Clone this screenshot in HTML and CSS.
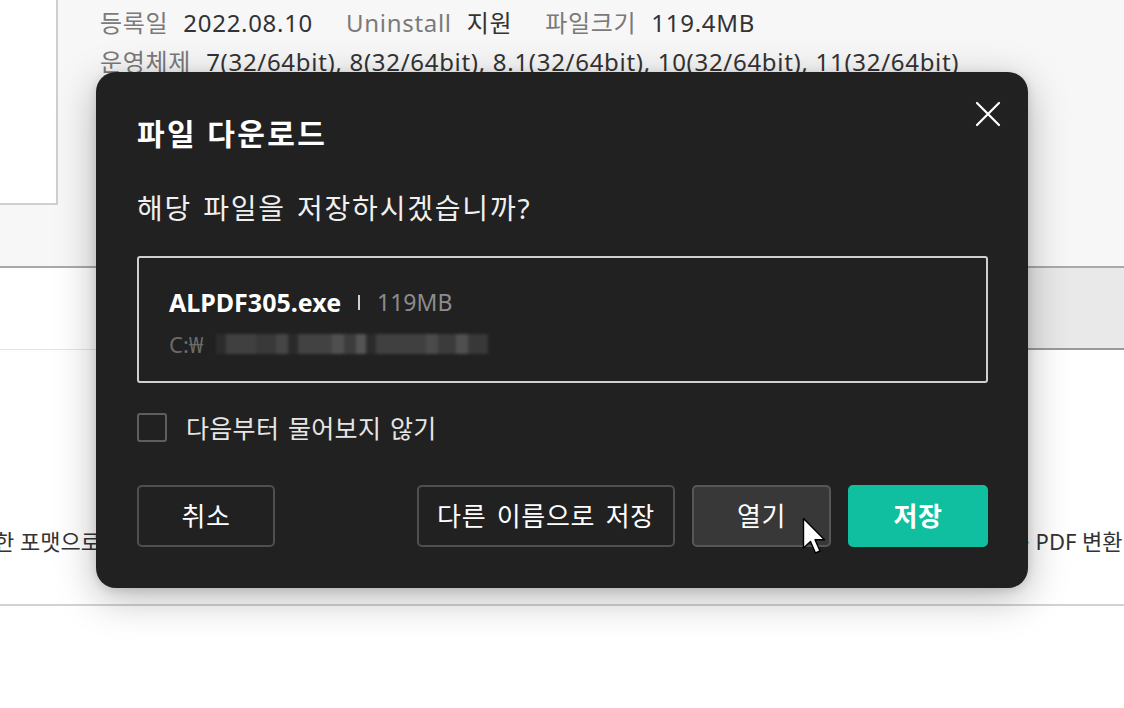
FILE: index.html
```html
<!DOCTYPE html>
<html lang="ko">
<head>
<meta charset="utf-8">
<title>파일 다운로드</title>
<link rel="stylesheet" href="styles.css">
</head>
<body>
<div class="page">
  <section class="top">
    <div class="thumb"></div>
    <div class="info">
      <div class="info-row">
        <span class="lbl">등록일</span><span class="val">2022.08.10</span>
        <span class="lbl">Uninstall</span><span class="val">지원</span>
        <span class="lbl">파일크기</span><span class="val">119.4MB</span>
      </div>
      <div class="info-row">
        <span class="lbl">운영체제</span><span class="val">7(32/64bit), 8(32/64bit), 8.1(32/64bit), 10(32/64bit), 11(32/64bit)</span>
      </div>
    </div>
  </section>
  <section class="band">
    <div class="band-left"></div>
    <div class="band-right"></div>
  </section>
  <section class="content">
    <div class="desc-row">
      <span class="desc-left">한 포맷으로</span>
      <span class="desc-right">· PDF 변환</span>
    </div>
  </section>
  <section class="footer"></section>
</div>

<div class="dialog" role="dialog">
  <button class="close" aria-label="닫기">
    <svg width="26" height="26" viewBox="0 0 26 26"><path d="M2 2 L24 24 M24 2 L2 24" stroke="#fff" stroke-width="2.2" fill="none" stroke-linecap="round"/></svg>
  </button>
  <h1 class="title">파일 다운로드</h1>
  <p class="question">해당 파일을 저장하시겠습니까?</p>
  <div class="filebox">
    <div class="file-line">
      <span class="fname">ALPDF305.exe</span>
      <span class="sep"></span>
      <span class="fsize">119MB</span>
    </div>
    <div class="path-line">
      <span class="path">C:₩</span><span class="blur"></span>
    </div>
  </div>
  <label class="check-row">
    <span class="checkbox"></span>
    <span class="check-label">다음부터 물어보지 않기</span>
  </label>
  <div class="actions">
    <button class="btn">취소</button>
    <div class="actions-right">
      <button class="btn btn-wide">다른 이름으로 저장</button>
      <button class="btn btn-hover">열기</button>
      <button class="btn btn-primary">저장</button>
    </div>
  </div>
</div>

<svg class="cursor" width="26" height="40" viewBox="0 0 26 40">
  <path d="M1.5 1.5 L1.5 31 L8.5 24.5 L13.5 36 L18 34 L13 22.8 L22.5 22.8 Z" fill="#fff" stroke="#000" stroke-width="1.4" stroke-linejoin="round"/>
</svg>
</body>
</html>
```

FILE: styles.css
```css
* { box-sizing: border-box; }
html, body { margin: 0; padding: 0; }
body {
  width: 1124px;
  height: 708px;
  overflow: hidden;
  background: #fff;
  font-family: "Noto Sans", "Noto Sans CJK KR", sans-serif;
  position: relative;
}

.page { width: 1124px; }

.top {
  height: 266px;
  background: #f7f7f7;
  display: flex;
  align-items: flex-start;
}
.thumb {
  width: 58px;
  height: 205px;
  background: #fff;
  border-right: 2px solid #cfcfcf;
  border-bottom: 2px solid #cfcfcf;
  flex: none;
}
.info {
  margin-left: 42px;
  padding-top: 3px;
  font-size: 24px;
  letter-spacing: 0.7px;
  white-space: nowrap;
}
.info-row { line-height: 39px; height: 39px; }
.lbl { color: #7a7a7a; margin-right: 15px; }
.val { color: #333; margin-right: 26px; }

.band {
  display: flex;
  height: 84px;
  border-top: 2px solid #a9a9a9;
}
.band-left {
  width: 96px;
  background: #fff;
  border-bottom: 1px solid #e4e4e4;
}
.band-right {
  flex: 1;
  background: #e9e9e9;
  border-bottom: 2px solid #9a9a9a;
}

.content {
  height: 256px;
  background: #fff;
  border-bottom: 2px solid #d2d2d2;
  padding-top: 176px;
}
.desc-row {
  display: flex;
  justify-content: space-between;
  font-size: 22px;
  line-height: 30px;
  color: #333;
  white-space: nowrap;
}
.desc-left { margin-left: -6px; }
.desc-right { width: 100px; overflow: hidden; }

.footer { height: 100px; background: #fff; }

/* Dialog */
.dialog {
  position: absolute;
  left: 96px;
  top: 72px;
  width: 932px;
  height: 516px;
  background: #212121;
  border-radius: 20px;
  padding: 0 40px 0 41px;
  box-shadow: 0 10px 40px rgba(0, 0, 0, 0.28), 0 2px 10px rgba(0, 0, 0, 0.12);
  color: #fff;
}
.close {
  position: absolute;
  right: 25px;
  top: 27px;
  width: 30px;
  height: 30px;
  padding: 2px;
  background: none;
  border: 0;
  display: flex;
  align-items: center;
  justify-content: center;
}
.title {
  margin: 41px 0 0;
  font-size: 30px;
  font-weight: 700;
  line-height: 42px;
  letter-spacing: 2.4px;
  color: #fff;
}
.question {
  margin: 35px 0 0;
  font-size: 28px;
  line-height: 36px;
  letter-spacing: 1.8px;
  word-spacing: 2px;
  color: #f0f0f0;
}
.filebox {
  margin-top: 30px;
  height: 127px;
  border: 2px solid #cfcfcf;
  border-radius: 3px;
  padding: 27px 30px 0;
}
.file-line {
  display: flex;
  align-items: center;
  height: 34px;
}
.fname {
  font-size: 25px;
  font-weight: 700;
  color: #fff;
}
.sep {
  width: 2px;
  height: 15px;
  background: #cfcfcf;
  margin: 0 17px 0 17px;
}
.fsize {
  font-size: 23px;
  color: #8c8c8c;
}
.path-line {
  margin-top: 12px;
  display: flex;
  align-items: center;
  height: 26px;
}
.path {
  font-size: 22px;
  color: #6a6a6a;
}
.blur {
  display: block;
  width: 272px;
  height: 20px;
  margin-left: 12px;
  background:
    linear-gradient(90deg,
      #2e2e2e 0 10px, #444 10px 40px, #3c3c3c 40px 60px, #4b4b4b 60px 72px, #2c2c2c 72px 82px,
      #464646 82px 116px, #555 116px 128px, #404040 128px 140px, #5a5a5a 140px 150px, #2d2d2d 150px 160px,
      #444 160px 210px, #505050 210px 222px, #3e3e3e 222px 240px, #555 240px 252px, #3b3b3b 252px 272px);
  filter: blur(1.5px);
  opacity: 0.9;
}
.check-row {
  display: flex;
  align-items: center;
  margin-top: 29px;
  height: 30px;
}
.checkbox {
  width: 30px;
  height: 29px;
  border: 2px solid #5f5f5f;
  border-radius: 3px;
  flex: none;
}
.check-label {
  margin-left: 19px;
  font-size: 25px;
  letter-spacing: 0.3px;
  word-spacing: 2px;
  color: #e6e6e6;
}
.actions {
  margin-top: 43px;
  display: flex;
  justify-content: space-between;
}
.actions-right { display: flex; gap: 17px; }
.btn {
  height: 62px;
  width: 138px;
  background: transparent;
  border: 2px solid #4f4f4f;
  border-radius: 5px;
  color: #fff;
  font-family: "Noto Sans", "Noto Sans CJK KR", sans-serif;
  font-size: 26px;
  letter-spacing: 0.7px;
  word-spacing: 3px;
  padding: 0 0 3px;
}
.btn-wide { width: 258px; }
.btn-hover { width: 139px; background: #383838; border-color: #575757; }
.btn-primary {
  width: 140px;
  background: #10bf9f;
  border-color: #10bf9f;
  font-weight: 700;
}

.cursor {
  position: absolute;
  left: 802px;
  top: 517px;
}
```
